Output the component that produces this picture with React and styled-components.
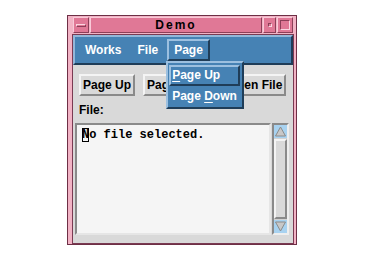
import React from "react";
import styled, { createGlobalStyle, css } from "styled-components";

const GlobalStyle = createGlobalStyle`
  html, body {
    margin: 0;
    padding: 0;
    background: #ffffff;
  }
  body {
    width: 380px;
    height: 266px;
    overflow: hidden;
    font-family: "Liberation Sans", Arial, sans-serif;
  }
`;

const raised = (light, dark, width = 2) => css`
  border-style: solid;
  border-width: ${width}px;
  border-color: ${light} ${dark} ${dark} ${light};
`;

const Window = styled.div`
  margin: 15px 0 0 67px;
  width: 230px;
  height: 230px;
  box-sizing: border-box;
  background: #f2b3c5;
  border: 1px solid #6e2f46;
  padding: 1px 3px 1px 5px;
  display: flex;
  flex-direction: column;
  gap: 2px;
`;

const TitleBar = styled.div`
  height: 16px;
  display: flex;
  gap: 1px;
`;

const TitleButton = styled.div`
  width: ${(p) => p.w}px;
  box-sizing: border-box;
  background: #e07896;
  ${raised("#f9cad8", "#8c3f58", 1)};
  display: flex;
  align-items: center;
  justify-content: center;
`;

const MenuGlyph = styled.div`
  width: 10px;
  height: 3px;
  box-sizing: border-box;
  ${raised("#fbd6e1", "#8c3f58", 1)};
`;

const IconifyGlyph = styled.div`
  width: 4px;
  height: 4px;
  box-sizing: border-box;
  ${raised("#8c3f58", "#fbd6e1", 1)};
`;

const MaxGlyph = styled.div`
  width: 10px;
  height: 10px;
  box-sizing: border-box;
  ${raised("#8c3f58", "#fbd6e1", 1)};
`;

const Title = styled.div`
  flex: 1;
  box-sizing: border-box;
  background: #e07896;
  ${raised("#f9cad8", "#8c3f58", 1)};
  font-size: 12px;
  font-weight: bold;
  letter-spacing: 2px;
  color: #000;
  line-height: 14px;
  text-align: center;
`;

const Client = styled.div`
  flex: 1;
  background: #d9d9d9;
  outline: 1px solid #7a3a52;
  display: flex;
  flex-direction: column;
`;

const MenuBar = styled.div`
  height: 30px;
  box-sizing: border-box;
  background: #4682b4;
  ${raised("#93b7d9", "#1f3d58")};
  display: flex;
  align-items: center;
  padding-left: 3px;
  gap: 2px;
  position: relative;
  z-index: 2;
`;

const MenuItem = styled.div`
  position: relative;
  height: 22px;
  box-sizing: border-box;
  border: 2px solid transparent;
  padding: 0 5px;
  color: #fff;
  font-size: 12px;
  font-weight: bold;
  line-height: 18px;
  ${(p) => p.$active && raised("#9cc0e0", "#1f3d58")};
`;

const Dropdown = styled.div`
  position: absolute;
  left: -3px;
  top: 20px;
  width: 78px;
  box-sizing: border-box;
  background: #4682b4;
  ${raised("#9cc0e0", "#1f3d58")};
  padding: 2px 2px 0 1px;
  display: flex;
  flex-direction: column;
`;

const DropItem = styled.div`
  height: 21px;
  box-sizing: border-box;
  border: 2px solid transparent;
  padding-left: 1px;
  color: #fff;
  font-size: 12px;
  font-weight: bold;
  line-height: 17px;
  white-space: nowrap;
  ${(p) => p.$active && raised("#9cc0e0", "#1f3d58")};
`;

const Mnemonic = styled.span`
  text-decoration: underline;
  text-underline-offset: 2px;
`;

const Content = styled.div`
  flex: 1;
  display: flex;
  flex-direction: column;
  padding: 9px 4px 8px 2px;
  min-height: 0;
`;

const ButtonRow = styled.div`
  display: flex;
  gap: 8px;
  margin-left: 4px;
`;

const Button = styled.div`
  height: 22px;
  box-sizing: border-box;
  background: #d9d9d9;
  ${raised("#f4f4f4", "#8a8a8a")};
  padding: 0 2px;
  font-size: 12px;
  font-weight: bold;
  line-height: 18px;
  color: #000;
  white-space: nowrap;
`;

const Label = styled.div`
  margin: 5px 0 0 4px;
  font-size: 12px;
  font-weight: bold;
  line-height: 18px;
  color: #000;
  height: 22px;
`;

const TextRow = styled.div`
  flex: 1;
  display: flex;
  gap: 1px;
  min-height: 0;
`;

const TextArea = styled.div`
  flex: 1;
  box-sizing: border-box;
  background: #f5f5f5;
  ${raised("#8a8a8a", "#e6e6e6")};
  padding: 3px 5px;
  font-family: "Liberation Mono", "Courier New", monospace;
  font-size: 12px;
  font-weight: bold;
  line-height: 14px;
  color: #000;
`;

const Cursor = styled.span`
  outline: 1px solid #000;
  outline-offset: -1px;
`;

const Scrollbar = styled.div`
  width: 17px;
  box-sizing: border-box;
  ${raised("#8a8a8a", "#eeeeee")};
  background: #d2d2d2;
  display: flex;
  flex-direction: column;
  justify-content: space-between;
`;

const Arrow = styled.div`
  height: 13px;
  background: #a8d2f0;
  display: flex;
  align-items: center;
  justify-content: center;
`;

const Thumb = styled.div`
  flex: 1;
  margin: 1px 0;
  background: #d9d9d9;
  ${raised("#f4f4f4", "#8a8a8a")};
`;

const Triangle = ({ down }) => (
  <svg width="11" height="11" viewBox="0 0 11 11">
    <polygon
      points={down ? "0.5,1 10.5,1 5.5,10" : "5.5,1 10.5,10 0.5,10"}
      fill="#c8c8c8"
      stroke="#8a8a8a"
    />
  </svg>
);

export default function App() {
  return (
    <>
      <GlobalStyle />
      <Window>
        <TitleBar>
          <TitleButton w={16}>
            <MenuGlyph />
          </TitleButton>
          <Title>Demo</Title>
          <TitleButton w={13}>
            <IconifyGlyph />
          </TitleButton>
          <TitleButton w={16}>
            <MaxGlyph />
          </TitleButton>
        </TitleBar>
        <Client>
          <MenuBar>
            <MenuItem>Works</MenuItem>
            <MenuItem>File</MenuItem>
            <MenuItem $active>
              Page
              <Dropdown>
                <DropItem $active>
                  <Mnemonic>P</Mnemonic>age Up
                </DropItem>
                <DropItem>
                  Page <Mnemonic>D</Mnemonic>own
                </DropItem>
              </Dropdown>
            </MenuItem>
          </MenuBar>
          <Content>
            <ButtonRow>
              <Button>Page Up</Button>
              <Button>Page Down</Button>
              <Button>Open File</Button>
            </ButtonRow>
            <Label>File:</Label>
            <TextRow>
              <TextArea>
                <Cursor>N</Cursor>o file selected.
              </TextArea>
              <Scrollbar>
                <Arrow>
                  <Triangle />
                </Arrow>
                <Thumb />
                <Arrow>
                  <Triangle down />
                </Arrow>
              </Scrollbar>
            </TextRow>
          </Content>
        </Client>
      </Window>
    </>
  );
}
